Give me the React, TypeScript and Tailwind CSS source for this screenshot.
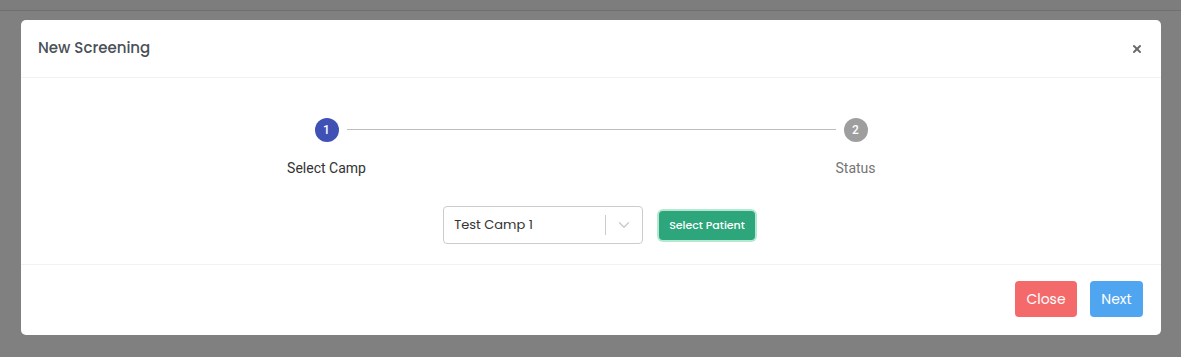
import { X, ChevronDown } from "lucide-react";

const ui = { fontFamily: '"Poppins", "Inter", "Noto Sans", sans-serif' };
const rob = { fontFamily: 'Roboto, "Noto Sans", sans-serif' };

function Step({ n, label, active }: { n: number; label: string; active?: boolean }) {
  return (
    <div className="flex flex-1 flex-col items-center" style={rob}>
      <span
        className={`grid h-6 w-6 place-items-center rounded-full text-[12px] font-medium text-white ${
          active ? "bg-[#3f51b5]" : "bg-[#9e9e9e]"
        }`}
      >
        {n}
      </span>
      <p className={`mt-4 text-[14px] leading-5 ${active ? "text-[#333333]" : "text-[#757575]"}`}>{label}</p>
    </div>
  );
}

export default function App() {
  return (
    <div className="min-h-[357px] bg-[#808080]" style={ui}>
      <div className="h-[11px] border-b border-[#707070] bg-[#7d7d7d]" />
      <div className="pl-[21px] pr-[20px] pt-[9px] pb-[22px]">
        <div className="overflow-hidden rounded-[5px] bg-white">
          {/* header */}
          <div className="flex h-[58px] items-center justify-between border-b border-[#eff2f7] pl-[17px] pr-[18px]">
            <h5 className="text-[15px] font-medium text-[#495057]">New Screening</h5>
            <X className="h-3 w-3 text-[#6b6b6b]" strokeWidth={4} />
          </div>

          {/* body */}
          <div className="px-[41px] pt-[40px] pb-[20px]">
            <div className="relative flex">
              <div className="absolute top-[11px] left-[calc(25%+20px)] right-[calc(25%+20px)] h-px bg-[#bdbdbd]" />
              <Step n={1} label="Select Camp" active />
              <Step n={2} label="Status" />
            </div>

            <div className="mt-[28px] flex items-center justify-center gap-4 pl-[16px]">
              <div className="flex h-[38px] w-[200px] items-center rounded-[4px] border border-[#cccccc] bg-white">
                <span className="flex-1 pl-[10px] text-[13px] text-[#333333]">Test Camp 1</span>
                <span className="h-[20px] w-px bg-[#cccccc]" />
                <span className="grid w-[36px] place-items-center">
                  <ChevronDown className="h-[18px] w-[18px] text-[#cccccc]" strokeWidth={2} />
                </span>
              </div>
              <button className="h-[29px] rounded-[4px] bg-[#2ca67a] px-[10px] text-[11px] font-medium text-white ring-2 ring-[#b5e8d3]">
                Select Patient
              </button>
            </div>
          </div>

          {/* footer */}
          <div className="flex justify-end gap-[13px] border-t border-[#eff2f7] pt-[16px] pb-[18px] pr-[18px]">
            <button className="h-[36px] w-[62px] rounded-[4px] bg-[#f46a6a] text-[14px] text-white">Close</button>
            <button className="h-[36px] w-[53px] rounded-[4px] bg-[#50a5f1] text-[14px] text-white">Next</button>
          </div>
        </div>
      </div>
    </div>
  );
}
